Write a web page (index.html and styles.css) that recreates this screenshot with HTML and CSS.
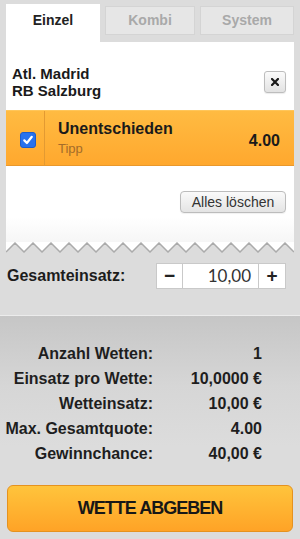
FILE: index.html
```html
<!DOCTYPE html>
<html lang="de">
<head>
<meta charset="utf-8">
<title>Wettschein</title>
<link rel="stylesheet" href="styles.css">
</head>
<body>
<div class="tabs">
  <div class="tab active">Einzel</div>
  <div class="tab">Kombi</div>
  <div class="tab">System</div>
</div>
<div class="card">
  <div class="match">
    <div class="teams">
      <div>Atl. Madrid</div>
      <div>RB Salzburg</div>
    </div>
    <button class="close" type="button" aria-label="Entfernen">
      <svg width="8" height="8" viewBox="0 0 8 8"><path d="M1 1L7 7M7 1L1 7" stroke="#1a1a1a" stroke-width="2.2" stroke-linecap="square"/></svg>
    </button>
  </div>
  <div class="pick">
    <div class="pick-check">
      <span class="checkbox">
        <svg width="12" height="12" viewBox="0 0 12 12"><path d="M2.3 6.4L4.9 9L9.8 2.8" fill="none" stroke="#fff" stroke-width="2.2" stroke-linecap="round" stroke-linejoin="round"/></svg>
      </span>
    </div>
    <div class="pick-name">
      <div class="pick-title">Unentschieden</div>
      <div class="pick-sub">Tipp</div>
    </div>
    <div class="pick-odds">4.00</div>
  </div>
  <div class="clear-row">
    <button class="clear" type="button">Alles löschen</button>
  </div>
</div>
<svg class="zigzag" width="288" height="11" viewBox="0 0 288 11" preserveAspectRatio="none">
  <polygon fill="#fff" points="0,0 288,0 288,10 279,1 270,10 261,1 252,10 243,1 234,10 225,1 216,10 207,1 198,10 189,1 180,10 171,1 162,10 153,1 144,10 135,1 126,10 117,1 108,10 99,1 90,10 81,1 72,10 63,1 54,10 45,1 36,10 27,1 18,10 9,1 0,10"/>
  <polyline fill="none" stroke="#ababab" stroke-width="1.5" points="0,10 9,1 18,10 27,1 36,10 45,1 54,10 63,1 72,10 81,1 90,10 99,1 108,10 117,1 126,10 135,1 144,10 153,1 162,10 171,1 180,10 189,1 198,10 207,1 216,10 225,1 234,10 243,1 252,10 261,1 270,10 279,1 288,10"/>
</svg>
<div class="stake">
  <div class="stake-label">Gesamteinsatz:</div>
  <div class="stepper">
    <span class="step minus">−</span>
    <span class="step-value">10,00</span>
    <span class="step plus">+</span>
  </div>
</div>
<div class="summary">
  <div class="rows">
    <div class="lbl">Anzahl Wetten:</div><div class="val">1</div>
    <div class="lbl">Einsatz pro Wette:</div><div class="val">10,0000 €</div>
    <div class="lbl">Wetteinsatz:</div><div class="val">10,00 €</div>
    <div class="lbl">Max. Gesamtquote:</div><div class="val">4.00</div>
    <div class="lbl">Gewinnchance:</div><div class="val">40,00 €</div>
  </div>
  <button class="submit" type="button">WETTE ABGEBEN</button>
</div>
</body>
</html>
```

FILE: styles.css
```css
* { box-sizing: border-box; }
html, body { margin: 0; padding: 0; }
body {
  width: 300px;
  height: 539px;
  overflow: hidden;
  background: #dcdcdc;
  font-family: "Liberation Sans", Arial, sans-serif;
  color: #1c1c1c;
}
button { font-family: inherit; padding: 0; cursor: pointer; }

.tabs {
  display: grid;
  grid-template-columns: 94px 90px 94px;
  column-gap: 5px;
  padding: 4px 6px 0 6px;
  height: 42px;
}
.tab {
  margin-top: 2px;
  height: 29px;
  line-height: 27px;
  background: #e6e6e6;
  border: 1px solid #d4d4d4;
  text-align: center;
  font-size: 14px;
  font-weight: bold;
  color: #a9a9a9;
}
.tab.active {
  margin-top: 0;
  height: 38px;
  padding-top: 2px;
  line-height: 29px;
  background: #fff;
  border: none;
  color: #222;
}

.card {
  margin: 0 6px;
  background: linear-gradient(#fff 175px, #f6f6f6 200px);
  padding-bottom: 29px;
}
.match {
  display: flex;
  align-items: center;
  justify-content: space-between;
  padding: 23px 8px 11px 6px;
}
.teams {
  font-size: 15px;
  font-weight: bold;
  line-height: 17px;
  color: #1a1a1a;
}
.close {
  width: 22px;
  height: 22px;
  border: 1px solid #bdbdbd;
  border-radius: 3px;
  background: linear-gradient(#fbfbfb, #e2e2e2);
  display: flex;
  align-items: center;
  justify-content: center;
  box-shadow: 0 1px 1px rgba(0,0,0,0.08);
}

.pick {
  display: flex;
  align-items: center;
  height: 56px;
  background: linear-gradient(#ffbb42, #ffa82e);
  border-top: 1px solid #ffc65a;
  border-bottom: 1px solid #e9982c;
}
.pick-check {
  width: 39px;
  height: 100%;
  border-right: 1px solid #e39a32;
  display: flex;
  align-items: center;
  padding-left: 14px;
  padding-top: 3px;
}
.checkbox {
  width: 16px;
  height: 16px;
  border-radius: 3px;
  background: #2872ee;
  border: 1px solid #1d5ccc;
  display: flex;
  align-items: center;
  justify-content: center;
}
.pick-name {
  flex: 1;
  padding-left: 13px;
}
.pick-title {
  font-size: 16px;
  font-weight: bold;
  line-height: 18px;
  color: #1a1a1a;
}
.pick-sub {
  margin-top: 3px;
  font-size: 13px;
  line-height: 16px;
  color: #a46c2a;
}
.pick-odds {
  padding: 5px 14px 0 0;
  font-size: 16px;
  font-weight: bold;
  color: #1a1a1a;
}

.clear-row {
  display: flex;
  justify-content: flex-end;
  padding: 25px 8px 0 0;
}
.clear {
  width: 106px;
  height: 22px;
  border: 1px solid #bcbcbc;
  border-radius: 4px;
  background: linear-gradient(#fafafa, #e4e4e4);
  font-size: 14px;
  color: #333;
  box-shadow: 0 1px 1px rgba(0,0,0,0.06);
}

.zigzag {
  display: block;
  margin: 0 6px;
  height: 11px;
}

.stake {
  display: flex;
  align-items: center;
  justify-content: space-between;
  margin-top: 10px;
  padding: 0 14px 0 7px;
  height: 26px;
  margin-bottom: 26px;
}
.stake-label {
  font-size: 16px;
  font-weight: bold;
  color: #1c1c1c;
}
.stepper {
  display: flex;
  flex-shrink: 0;
  height: 26px;
  border: 1px solid #c9c9c9;
  background: #fff;
}
.step {
  width: 26px;
  flex-shrink: 0;
  display: flex;
  align-items: center;
  justify-content: center;
  font-size: 19px;
  font-weight: bold;
  color: #222;
}
.minus { width: 26px; border-right: 1px solid #c9c9c9; }
.plus { width: 27px; border-left: 1px solid #c9c9c9; }
.step-value {
  width: 75px;
  flex-shrink: 0;
  text-align: right;
  padding-right: 7px;
  font-family: Lato, "Liberation Sans", sans-serif;
  font-size: 17px;
  line-height: 24px;
  color: #333;
}

.summary {
  border-top: 1px solid #ececec;
  background: linear-gradient(#c6c6c6, #d6d6d6 70px, #dcdcdc 130px);
  padding-top: 25px;
  height: 224px;
}
.rows {
  display: grid;
  grid-template-columns: 153px 109px;
  font-size: 16px;
  font-weight: bold;
  line-height: 25px;
  color: #1e1e1e;
  text-align: right;
}
.lbl { white-space: nowrap; }
.submit {
  display: block;
  margin: 19px 7px 0 7px;
  width: 286px;
  height: 47px;
  border: 1px solid #e5921f;
  border-radius: 6px;
  background: linear-gradient(#ffc43c, #ffa326);
  font-size: 18px;
  font-weight: bold;
  letter-spacing: -1px;
  color: #171717;
}
```
